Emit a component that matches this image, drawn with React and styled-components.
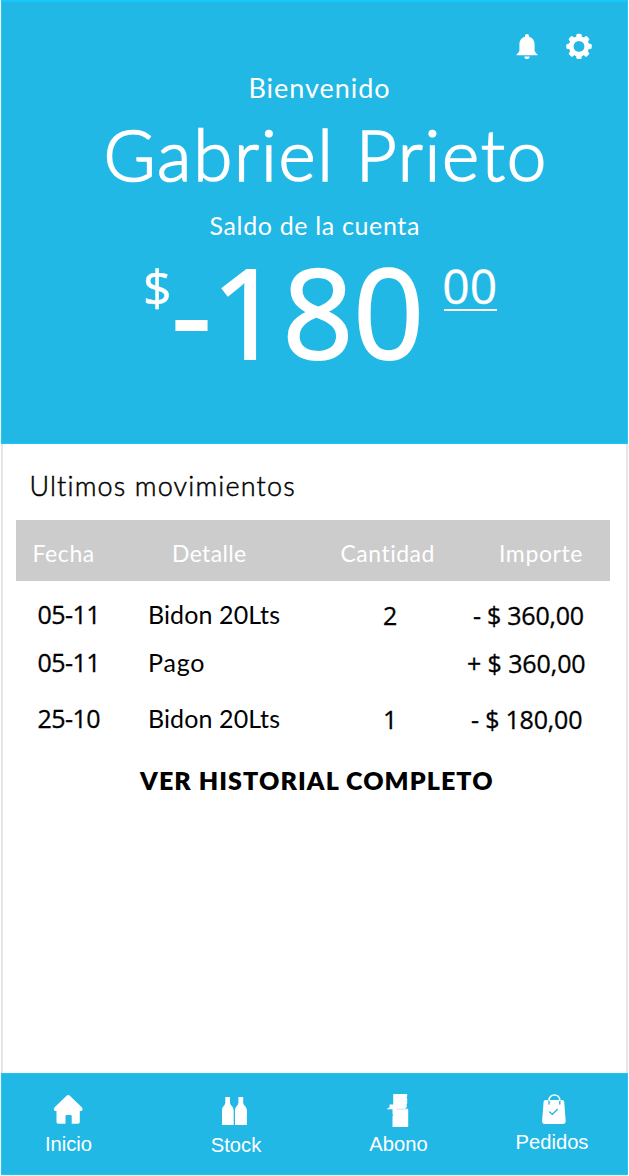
import React from 'react'
import styled, { createGlobalStyle } from 'styled-components'

const GlobalStyle = createGlobalStyle`
    * {
        box-sizing: border-box;
    }
    body {
        margin: 0;
        background: #fff;
    }
`

const Screen = styled.div`
    display: flex;
    flex-direction: column;
    height: 1175px;
    width: 627px;
    margin-left: 1px;
    background: #fff;
    font-family: Lato, "Open Sans", sans-serif;
    color: #000;
`

const Header = styled.header`
    display: flex;
    flex-direction: column;
    height: 444px;
    flex: none;
    padding-top: 31px;
    background: #21b8e6;
    border: 1px solid #18c9f8;
    border-top-width: 2px;
    color: #fff;
`

const HeaderIcons = styled.div`
    display: flex;
    justify-content: flex-end;
    gap: 28px;
    height: 27px;
    margin: 0 35px 12px 0;
`

const Text = styled.div`
    font-size: ${p => p.$size}px;
    line-height: ${p => p.$line}px;
    font-weight: ${p => p.$weight || 400};
    letter-spacing: ${p => p.$track || 0}px;
    padding-left: ${p => p.$left || 0}px;
    margin-top: ${p => p.$top || 0}px;
    -webkit-text-stroke: ${p => p.$stroke || 0}px currentColor;
    white-space: pre;
`

/* figures without a foot on the 1 */
const Figures = styled(Text)`
    font-family: "Open Sans", "Noto Sans", sans-serif;
`

const Balance = styled.div`
    display: flex;
    align-items: flex-start;
    margin-left: 141px;
`

const Cents = styled(Figures)`
    margin-left: 19.5px;
    width: 53px;
    height: 49px;
    text-indent: -1.5px;
    border-bottom: 2px solid #fff;
`

const Main = styled.main`
    flex: 1;
    border: 2px solid #e6e6e6;
    border-width: 0 2px;
    padding: 26px 16px 0 13px;
`

const Table = styled.div`
    width: 594px;
    margin-top: 18px;
`

const Row = styled.div`
    display: grid;
    grid-template-columns: 132px 192px 131px 139px;
    height: ${p => p.$height}px;
`

const HeadRow = styled(Row)`
    background: #ccc;
    color: #fff;
    height: 61px;
    padding-top: 19px;
    margin-bottom: 18px;
`

const Importe = styled(Figures)`
    margin-left: ${p => p.$shift}px;
`

const Nav = styled.nav`
    display: grid;
    grid-template-columns: 167.5px 162.5px 153.5px 100px;
    height: 102px;
    flex: none;
    padding: 19px 0 0 16.5px;
    background: #21b8e6;
    border: 1px solid #18c9f8;
    color: #fff;
`

const NavItem = styled.div`
    width: 100px;
    display: flex;
    flex-direction: column;
    align-items: center;
    font: 20.2px/24px "Liberation Sans", Arial, sans-serif;

    & svg {
        flex: none;
        margin-bottom: ${p => p.$gap}px;
    }
`

const Bell = () => (
    <svg width="22" height="27" viewBox="0 0 22 27" fill="#fff">
        <path d="M11 1c-1.300 0-2 .9-2 2v.700C5.300 4.700 3.400 7.700 3.400 11.500v5.500c0 1.500-.7 2.600-2.900 4.500v.8h21v-.8c-2.200-1.900-2.900-3-2.900-4.500v-5.500c0-3.800-1.900-6.800-5.600-7.800V3c0-1.100-.7-2-2-2z" />
        <path d="M8.300 23.500h5.400a2.700 2.500 0 0 1-5.400 0z" />
    </svg>
)

const Gear = () => (
    <svg width="26" height="27" viewBox="0 0 26 27">
        <g transform="translate(13 13.400)">
            {[0, 45, 90, 135].map(a => (
                <rect key={a} x="-2.700" y="-12.700" width="5.400" height="25.400" rx="1.500" fill="#fff" transform={`rotate(${a})`} />
            ))}
            <circle r="10.200" fill="#fff" />
            <circle r="5.400" fill="#21b8e6" />
        </g>
    </svg>
)

const HomeIcon = () => (
    <svg width="34" height="34" viewBox="0 0 34 34" fill="#fff">
        <path d="M14.800 2.500q1.400-1.100 2.800 0L30 14.500q1.500 2.500-.8 3.500h-1.400v11q0 1.800-1.800 1.800h-6.300V23q0-1-1-1h-4.200q-1 0-1 1v7.800H6.300q-1.800 0-1.800-1.800V18H3.200Q.9 17 2.400 14.500z" />
    </svg>
)

const BottlesIcon = () => (
    <svg width="34" height="34" viewBox="0 0 34 34" fill="#fff">
        <path d="M6.300 4H11v5.700c.3 3 3.700 3.500 3.700 8V32H3V17.700c0-4.500 3-5 3.300-8z" />
        <path d="M19.400 4h4.800v5.700c.3 3 3.700 3.500 3.700 8V32H16V17.700c0-4.500 3.100-5 3.400-8z" />
    </svg>
)

const DispenserIcon = () => (
    <svg width="34" height="34" viewBox="0 0 34 34" fill="#fff">
        <path d="M11.200 1h14v2.500l-.8 1 .8 1v5l-.8 1.200.8 1.300-1.800 2.700h2.800V34H10.500V23l.8-1-.8-1v-4.700h-6l3.200-2.300-.2-2.500h3.700z" />
        <path d="M14.500 16.200h11" stroke="#8edcf3" strokeWidth=".6" />
    </svg>
)

const BagIcon = () => (
    <svg width="34" height="34" viewBox="0 0 34 34" fill="none" strokeLinecap="round">
        <path d="M10.500 7h16.800q1.700 0 1.900 1.700L30.700 28q.1 3-2.700 3H9.800Q7 31 7.100 28L8.600 8.700Q8.800 7 10.500 7z" fill="#fff" />
        <path d="M14 11V7M24.800 11V7M14.700 19l2.600 2.400 5-5" stroke="#21b8e6" strokeWidth="1.400" />
        <path d="M14 7.300C14 .2 24.800.2 24.800 7.300" stroke="#fff" strokeWidth="1.600" />
    </svg>
)

const movimientos = [
    { fecha: '05-11', detalle: 'Bidon 20Lts', cantidad: '2', importe: '- $ 360,00', height: 48, shift: 2, track: -0.25 },
    { fecha: '05-11', detalle: 'Pago', cantidad: '', importe: '+ $ 360,00', height: 56, shift: -4, track: -0.1 },
    { fecha: '25-10', detalle: 'Bidon 20Lts', cantidad: '1', importe: '- $ 180,00', height: 56, shift: 0, track: -0.2 },
]

const App = () => {
    return (
        <>
            <GlobalStyle />
            <Screen>
                <Header>
                    <HeaderIcons>
                        <Bell />
                        <Gear />
                    </HeaderIcons>
                    <Text $size={27} $line={32} $track={0.95} $left={246.5}>Bienvenido</Text>
                    <Text $size={71} $line={80} $weight={300} $track={1.75} $stroke={1.7} $left={101.5} $top={10}>Gabriel Prieto</Text>
                    <Text $size={25} $line={30} $track={0.65} $left={207.5} $top={16}>Saldo de la cuenta</Text>
                    <Balance>
                        <Figures $size={50} $line={50} $stroke={0.5} $top={22}>$</Figures>
                        <Figures $size={124} $line={120} $weight={500} $track={0} $stroke={2} $top={10.6}>-180</Figures>
                        <Cents $size={48} $line={48} $stroke={0.3} $top={22}>00</Cents>
                    </Balance>
                </Header>
                <Main>
                    <Text $size={27} $line={32} $weight={300} $track={1.15} $stroke={0.5} $left={13.5}>Ultimos movimientos</Text>
                    <Table>
                        <HeadRow>
                            <Text $size={23} $line={28} $track={0.6} $left={16.500}>Fecha</Text>
                            <Text $size={23} $line={28} $track={0.35} $left={24}>Detalle</Text>
                            <Text $size={23} $line={28} $track={0.5} $left={0.5}>Cantidad</Text>
                            <Text $size={23} $line={28} $track={0.6} $left={28}>Importe</Text>
                        </HeadRow>
                        {movimientos.map((m, i) => (
                            <Row key={i} $height={m.height}>
                                <Figures $size={25} $line={30} $track={-0.55} $stroke={0.3} $left={21.5}>{m.fecha}</Figures>
                                <Text $size={25} $line={30} $track={m.detalle === 'Pago' ? 0.8 : 0.1}>{m.detalle}</Text>
                                <Figures $size={25} $line={30} $stroke={0.3} $left={43} $top={1}>{m.cantidad}</Figures>
                                <Importe $size={25} $line={30} $track={m.track} $stroke={0.3} $top={1} $shift={m.shift}>{m.importe}</Importe>
                            </Row>
                        ))}
                    </Table>
                    <Text $size={25} $line={30} $weight={800} $track={1.1} $left={124} $top={6}>VER HISTORIAL COMPLETO</Text>
                </Main>
                <Nav>
                    <NavItem $gap={5}><HomeIcon />Inicio</NavItem>
                    <NavItem $gap={6}><BottlesIcon />Stock</NavItem>
                    <NavItem $gap={5}><DispenserIcon />Abono</NavItem>
                    <NavItem $gap={3}><BagIcon />Pedidos</NavItem>
                </Nav>
            </Screen>
        </>
    )
}

export default App
